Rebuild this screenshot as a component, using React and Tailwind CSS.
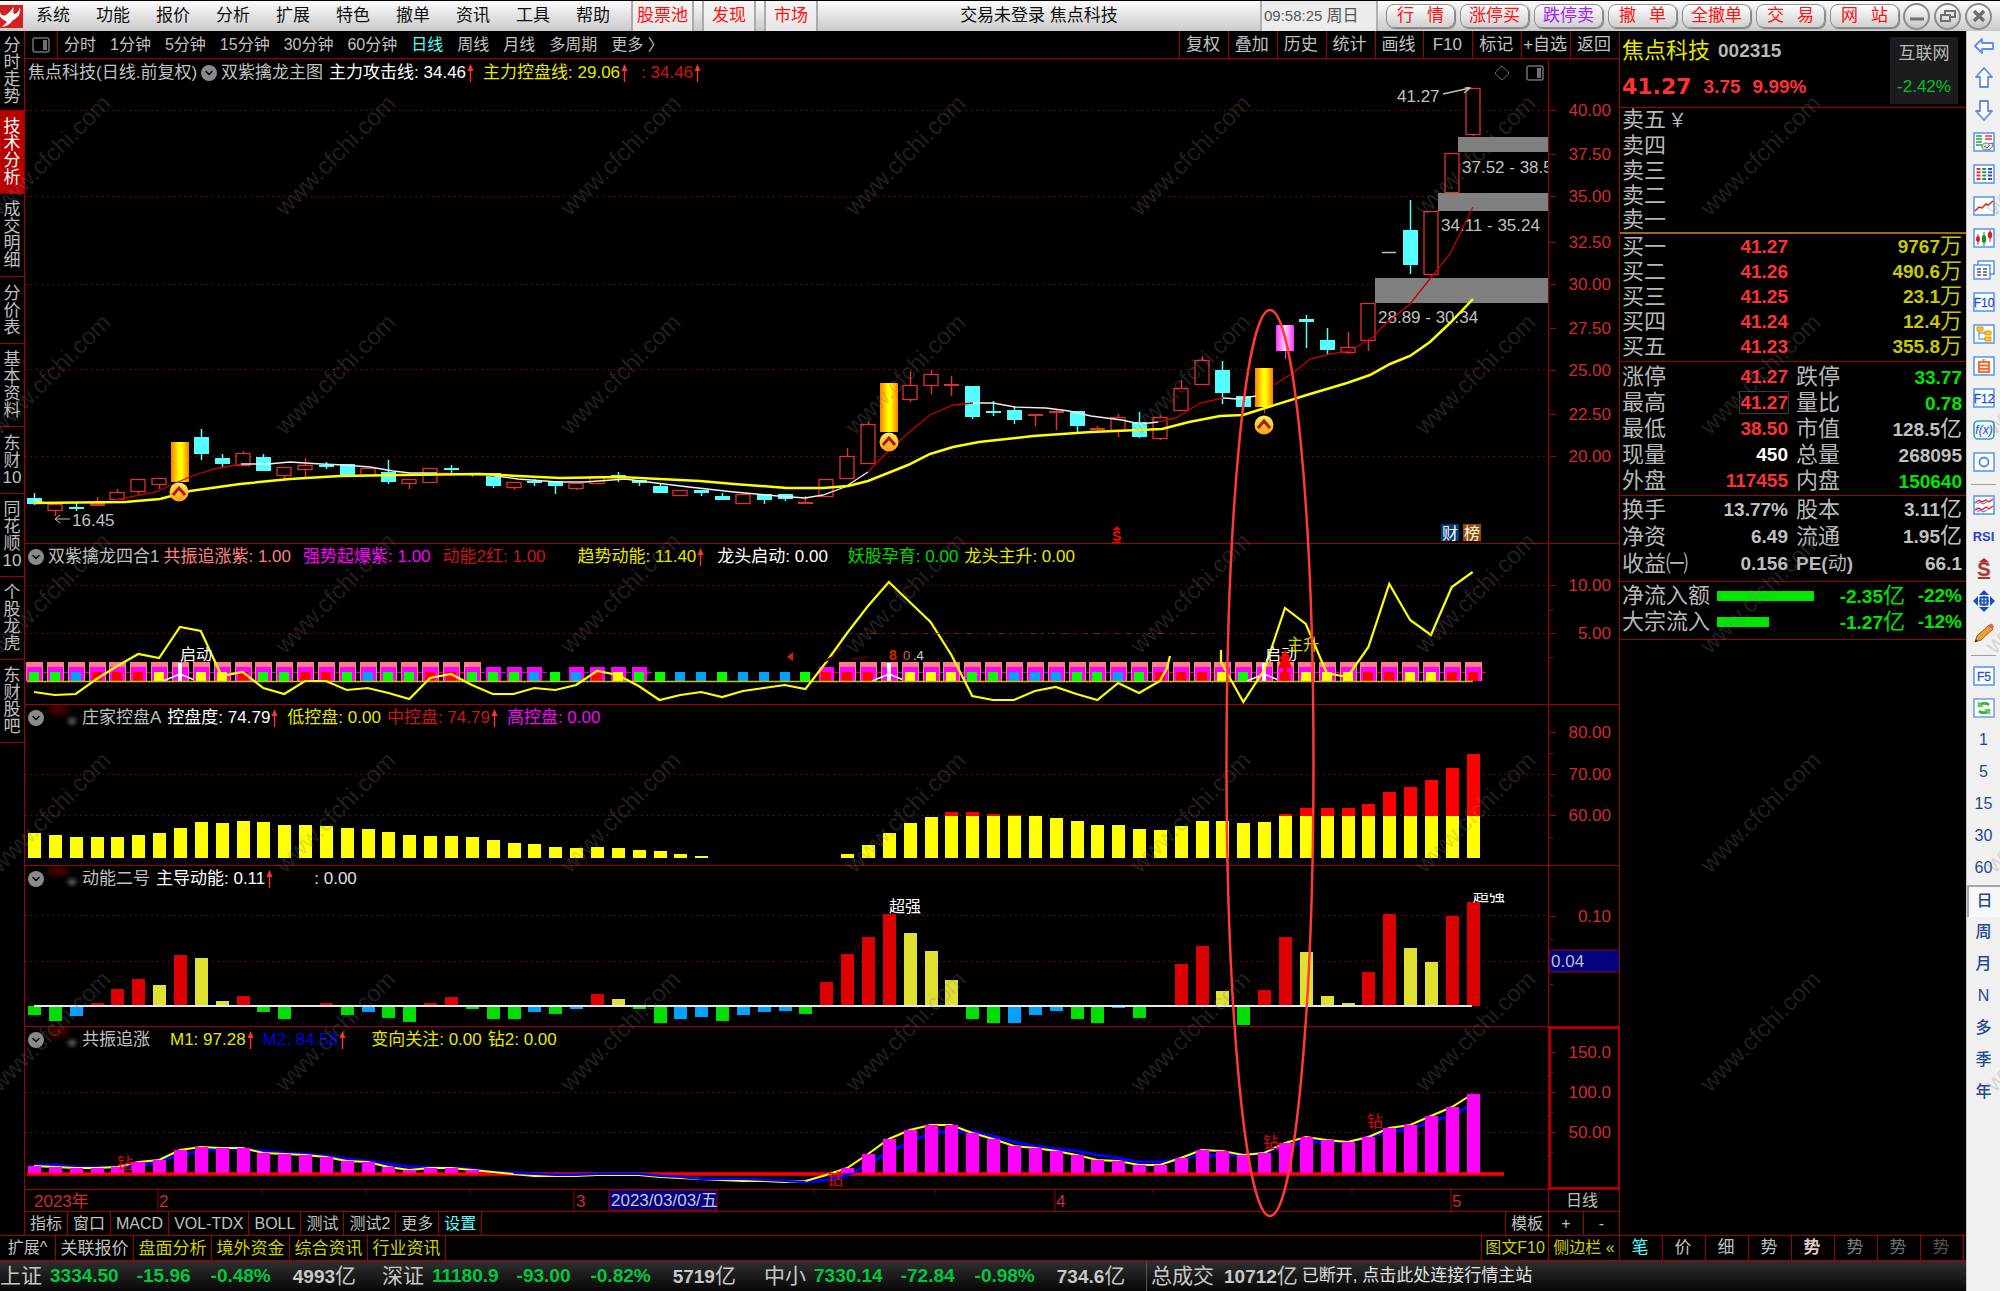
import { Fragment } from "react";
import { ChevronDown, Diamond } from "lucide-react";

// --- Shared chart geometry ---
const FIRST_X = 34;
const STEP = 20.85;
const barX = (i) => FIRST_X + i * STEP;

const BAR_COLORS = { r: "#dd0000", y: "#e0e030", g: "#00e000", b: "#00a2ff" };
const CELL_COLORS = { r: "#ff0000", y: "#ffff00", g: "#00ff00", b: "#00a2ff" };

// kind, body top, body bottom, high, low
const CANDLES = [
  ["c", 498, 504, 493, 505], ["r", 504, 510, 504, 516], ["c", 507, 508, 503, 511], ["r", 503, 506, 497, 506],
  ["r", 492, 499, 489, 499], ["r", 479, 491, 479, 494], ["r", 478, 484, 478, 489], ["gold", 442, 482, 442, 482],
  ["c", 437, 454, 429, 460], ["c", 458, 464, 454, 468], ["r", 453, 465, 451, 465], ["c", 457, 471, 454, 471],
  ["r", 467, 475, 467, 478], ["r", 465, 469, 458, 478], ["c", 465, 466, 462, 469], ["c", 464, 475, 464, 475],
  ["r", 468, 475, 468, 475], ["c", 472, 482, 460, 484], ["r", 479, 483, 479, 489], ["r", 468, 482, 468, 483],
  ["c", 468, 470, 465, 473], ["r", 473, 475, 473, 477], ["c", 473, 486, 473, 488], ["r", 482, 487, 482, 490],
  ["c", 481, 483, 479, 486], ["c", 481, 486, 481, 494], ["r", 483, 488, 483, 490], ["r", 476, 483, 476, 483],
  ["c", 475, 477, 472, 482], ["c", 480, 483, 480, 486], ["c", 486, 493, 484, 493], ["r", 490, 495, 490, 495],
  ["c", 490, 493, 490, 496], ["c", 496, 500, 493, 500], ["r", 494, 503, 494, 503], ["c", 494, 500, 494, 504],
  ["c", 494, 499, 494, 501], ["r", 502, 503, 496, 503], ["r", 479, 496, 479, 496], ["r", 456, 478, 448, 478],
  ["r", 424, 463, 421, 463], ["gold", 383, 432, 383, 432], ["r", 385, 399, 371, 402], ["r", 374, 385, 370, 394],
  ["r", 384, 385, 376, 396], ["c", 386, 417, 386, 419], ["c", 411, 413, 401, 416], ["c", 410, 420, 406, 424],
  ["r", 414, 415, 414, 426], ["r", 411, 413, 409, 430], ["c", 411, 426, 411, 432], ["r", 428, 430, 426, 432],
  ["r", 417, 430, 414, 437], ["c", 422, 437, 412, 438], ["r", 417, 438, 415, 440], ["r", 388, 410, 380, 410],
  ["r", 360, 384, 356, 384], ["c", 370, 393, 361, 404], ["c", 396, 407, 396, 409], ["gold", 368, 407, 368, 413],
  ["pink", 325, 351, 325, 359], ["c", 319, 322, 315, 348], ["c", 340, 350, 328, 354], ["r", 347, 352, 332, 354],
  ["r", 303, 340, 303, 351], ["flat", 252, 252, 252, 252], ["c", 230, 265, 200, 274], ["r", 211, 274, 211, 276],
  ["r", 153, 192, 153, 192], ["r", 88, 134, 88, 136],
];

const CONTROL_LINE =
  "34,503 125,502 160,499 190,491 240,484 290,479 340,476 400,475 480,474 560,478 620,477 700,481 734,484 787,488 823,488 848,486 868,481 908,465 930,454 953,447 979,442 1033,436 1091,432 1162,429 1189,422 1220,416 1243,415 1265,408 1310,394 1347,383 1370,375 1390,364 1410,356 1430,342 1450,323 1473,299";

// attack line, red while rising and white while falling
const ATTACK_LINE = [
  ["w", "34,500 45,503"],
  ["r", "115,500 156,492 178,482 192,476 214,469 241,464"],
  ["w", "241,464 268,464 290,462 321,464 344,465 370,467 393,471 410,473 437,473"],
  ["r", "437,473 473,474 495,476"],
  ["w", "495,476 518,479 558,482 585,482 625,479 656,483 689,487 734,492 778,496 805,498 823,495 845,487 868,472"],
  ["r", "868,472 890,449 912,430 930,415 953,405 973,403"],
  ["w", "973,403 993,403 1015,407 1046,408 1069,411 1091,416 1122,420 1140,424 1158,422"],
  ["r", "1158,422 1176,418 1200,403 1223,398"],
  ["w", "1223,398 1238,399 1256,396"],
  ["r", "1274,385 1293,373 1310,359 1330,354 1350,351 1373,337 1383,326 1410,304 1433,275 1450,254 1473,207"],
];

const GAPS = [
  { x: 1458, y: 137, h: 15, label: "37.52 - 38.50", lx: 1462, ly: 173 },
  { x: 1438, y: 193, h: 18, label: "34.11 - 35.24", lx: 1441, ly: 231 },
  { x: 1375, y: 278, h: 25, label: "28.89 - 30.34", lx: 1378, ly: 323 },
];

const CELLS = "ggbrrrywyyrggrrgbggrrgggbgbryggbbgbbbgrrrwyyyggbbbggbgrrrygwryyyrryyrr".split("");

const TREND = [
  692, 695, 694, 679, 666, 654, 658, 627, 631, 676, 672, 688, 694, 681, 681, 690, 688, 693, 699, 678, 674, 685, 694,
  694, 688, 690, 685, 671, 675, 686, 700, 695, 692, 697, 691, 688, 685, 689, 662, 633, 606, 582, 602, 622, 655, 696,
  700, 700, 691, 687, 694, 700, 683, 693, 681,
];
const TREND_TAIL = [702, 670, 608, 624, 673, 677, 647, 584, 620, 635, 587, 572];

const CONTROL = [
  833, 835, 837, 837, 837, 835, 833, 828, 822, 823, 821, 822, 825, 825, 826, 828, 829, 832, 835, 836, 836, 837, 840,
  843, 844, 847, 848, 847, 848, 850, 851, 854, 856, 0, 0, 0, 0, 0, 0, 854, 845, 833, 823, 817, 812, 812, 814, 815, 816,
  818, 821, 825, 825, 829, 830, 826, 821, 821, 823, 822, 814, 808, 808, 808, 804, 792, 787, 780, 768, 754,
];

const MOMENTUM = [
  ["g", 1015], ["g", 1021], ["b", 1016], ["r", 1003], ["r", 989], ["r", 979], ["y", 985], ["r", 955], ["y", 958],
  ["y", 1001], ["r", 996], ["g", 1012], ["g", 1019], null, ["r", 1003], ["g", 1015], ["b", 1012], ["g", 1018],
  ["g", 1022], ["r", 1003], ["r", 997], ["g", 1009], ["g", 1019], ["g", 1019], ["b", 1012], ["g", 1014], ["b", 1009],
  ["r", 994], ["y", 999], ["g", 1009], ["g", 1023], ["b", 1019], ["b", 1017], ["g", 1021], ["b", 1015], ["b", 1012],
  ["b", 1011], ["g", 1014], ["r", 982], ["r", 954], ["r", 937], ["r", 914], ["y", 933], ["y", 951], ["y", 980],
  ["g", 1019], ["g", 1023], ["b", 1023], ["b", 1015], ["b", 1011], ["g", 1019], ["g", 1023], ["b", 1008], ["g", 1018],
  null, ["r", 964], ["r", 946], ["y", 991], ["g", 1025], ["r", 990], ["r", 937], ["y", 952], ["y", 996], ["y", 1003],
  ["r", 972], ["r", 914], ["y", 948], ["y", 962], ["r", 916], ["r", 902],
];

const M1 = [
  1166, 1167, 1168, 1168, 1167, 1162, 1160, 1150, 1147, 1148, 1148, 1153, 1154, 1155, 1157, 1161, 1162, 1167, 1170,
  1168, 1168, 1170, 1172, 1174, 1176, 1176, 1176, 1175, 1175, 1175, 1177, 1178, 1179, 1180, 1181, 1181, 1182, 1181,
  1175, 1168, 1154, 1139, 1130, 1125, 1125, 1133, 1139, 1146, 1148, 1151, 1155, 1160, 1161, 1165, 1165, 1158, 1150,
  1151, 1155, 1153, 1143, 1137, 1140, 1142, 1137, 1128, 1125, 1116, 1107, 1094,
];
const M2 = [
  1165, 1165, 1167, 1167, 1167, 1166, 1161, 1155, 1151, 1149, 1149, 1151, 1153, 1154, 1156, 1159, 1161, 1164, 1167,
  1167, 1168, 1169, 1172, 1173, 1174, 1175, 1175, 1174, 1174, 1174, 1176, 1177, 1179, 1179, 1179, 1180, 1181, 1182,
  1180, 1175, 1165, 1152, 1142, 1133, 1131, 1132, 1136, 1142, 1146, 1149, 1151, 1155, 1158, 1162, 1162, 1159, 1155,
  1155, 1155, 1153, 1146, 1142, 1142, 1142, 1137, 1132, 1128, 1122, 1115, 1105,
];

const toPoints = (list, start = 0) => list.map((y, i) => `${barX(i + start)},${y}`).join(" ");

// --- Small pieces ---
const UpArrow = () => (
  <svg className="mx-px h-[18px] w-[7px] shrink-0" viewBox="0 0 7 18">
    <path d="M3.5 0 6.5 7H.5z" fill="#ff3232" />
    <path d="M3.5 6v12" stroke="#ff3232" strokeWidth="1.4" />
  </svg>
);

const Collapse = () => (
  <button aria-label="展开指标" className="flex h-4 w-4 shrink-0 items-center justify-center rounded-full bg-[#8a8a8a]">
    <ChevronDown className="h-3 w-3 text-black" strokeWidth={3} />
  </button>
);

// leftover of the masked author name before an indicator title
const Smudge = () => (
  <span className="relative h-6 w-8 shrink-0">
    <span className="absolute left-1 top-0 h-2 w-5 rounded-full bg-[#5a0000] blur-[3px]" />
    <span className="absolute right-0 top-3 h-1.5 w-2 rounded-full bg-[#666] blur-[2px]" />
  </span>
);

const SplitIcon = () => (
  <svg className="h-4 w-[18px]" viewBox="0 0 18 16" fill="none">
    <rect x="1" y="1" width="16" height="14" rx="2" stroke="#707070" strokeWidth="1.5" />
    <rect x="11" y="3" width="4" height="10" fill="#707070" />
  </svg>
);

const Grid = ({ ys }) =>
  ys.map((y) => <path key={y} d={`M25 ${y}.5H1548`} stroke="#a00000" strokeDasharray="1.5 4" />);

function Axis({ top, height, labels, minor = [], children }) {
  return (
    <svg className="block h-full w-[71px]" viewBox={`1548 ${top} 71 ${height}`}>
      {children}
      {labels.map(([y, text]) => (
        <Fragment key={text}>
          <path d={`M1549 ${y}.5h6`} stroke="#b00000" />
          <text x="1610" y={y + 6} textAnchor="end" fill="#d02c2c" fontSize="17">
            {text}
          </text>
        </Fragment>
      ))}
      {minor.map((y) => (
        <path key={y} d={`M1549 ${y}.5h3`} stroke="#b00000" />
      ))}
    </svg>
  );
}

function Panel({ header, headerClass = "h-[26px]", axis, children }) {
  return (
    <section className="flex border-b border-[#a00000]">
      <div className="min-w-0 flex-1">
        <div className={`flex items-center overflow-hidden whitespace-nowrap pl-[3px] text-[17px] leading-6 ${headerClass}`}>
          {header}
        </div>
        {children}
      </div>
      <div className="w-[71px] shrink-0 border-l border-[#a00000]">{axis}</div>
    </section>
  );
}

function Candle({ i, data: [kind, top, bottom, high, low] }) {
  const x = Math.round(barX(i));
  const h = Math.max(bottom - top, 2);
  if (kind === "flat") return <path d={`M${x - 7} ${top}.5h14`} stroke="#c0c0c0" strokeWidth="1.5" />;
  if (kind === "gold" || kind === "pink") {
    return (
      <g>
        <path d={`M${x}.5 ${bottom}V${low}`} stroke={kind === "gold" ? "#ff3232" : "#ff32ff"} />
        <rect x={x - 9} y={top} width="18" height={h} fill={`url(#${kind})`} />
      </g>
    );
  }
  const color = kind === "c" ? "#54ffff" : "#e03030";
  return (
    <g>
      <path d={`M${x}.5 ${high}V${top}M${x}.5 ${bottom}V${low}`} stroke={color} strokeWidth="1.5" />
      {kind === "c" || h < 4 ? (
        <rect x={x - 7} y={top} width="15" height={h} fill={color} />
      ) : (
        <rect x={x - 7} y={top + 0.5} width="14" height={h} fill="#000" stroke={color} strokeWidth="1.3" />
      )}
    </g>
  );
}

const Signal = ({ x, y }) => (
  <g>
    <circle cx={x} cy={y} r="9.5" fill="url(#coin)" />
    <path d={`M${x - 6} ${y + 3} ${x} ${y - 4} ${x + 6} ${y + 3}`} fill="none" stroke="#b01800" strokeWidth="3" />
  </g>
);

// --- Chart panels ---
function MainChart() {
  return (
    <Panel
      headerClass="h-[28px]"
      axis={
        <Axis
          top={59}
          height={484}
          labels={[
            [110, "40.00"], [154, "37.50"], [196, "35.00"], [242, "32.50"], [284, "30.00"],
            [328, "27.50"], [370, "25.00"], [414, "22.50"], [456, "20.00"],
          ]}
        />
      }
      header={
        <>
          <span className="text-[#c0c0c0]">焦点科技(日线.前复权)</span>
          <span className="mx-1">
            <Collapse />
          </span>
          <span className="mr-1.5 text-[#c0c0c0]">双紫擒龙主图</span>
          <span className="text-white">主力攻击线: 34.46</span>
          <UpArrow />
          <span className="ml-2 text-[#e6e600]">主力控盘线: 29.06</span>
          <UpArrow />
          <span className="ml-3 text-[#d01414]">: 34.46</span>
          <UpArrow />
          <span className="ml-auto flex items-center gap-4 pr-1">
            <Diamond className="h-4 w-4 text-[#707070]" strokeWidth={1.5} />
            <SplitIcon />
          </span>
        </>
      }
    >
      <svg className="block h-auto w-full" viewBox="25 87 1523 456">
        <defs>
          <linearGradient id="gold">
            <stop offset="0" stopColor="#ff7a00" />
            <stop offset=".45" stopColor="#ffff00" />
            <stop offset=".6" stopColor="#ffff00" />
            <stop offset="1" stopColor="#ff7a00" />
          </linearGradient>
          <linearGradient id="pink">
            <stop offset="0" stopColor="#ff32ff" />
            <stop offset=".5" stopColor="#ffd8ff" />
            <stop offset="1" stopColor="#ff32ff" />
          </linearGradient>
          <linearGradient id="coin" x2="0" y2="1">
            <stop offset="0" stopColor="#fff060" />
            <stop offset="1" stopColor="#ff9a10" />
          </linearGradient>
        </defs>
        <Grid ys={[110, 196, 284, 369, 456]} />
        {GAPS.map((g) => (
          <rect key={g.y} x={g.x} y={g.y} width={1548 - g.x} height={g.h} fill="#808080" />
        ))}
        {GAPS.map((g) => (
          <text key={g.label} x={g.lx} y={g.ly} fill="#c0c0c0" fontSize="17">
            {g.label}
          </text>
        ))}
        {CANDLES.map((c, i) => (
          <Candle key={i} i={i} data={c} />
        ))}
        {ATTACK_LINE.map(([tone, pts]) => (
          <polyline key={pts} points={pts} fill="none" stroke={tone === "r" ? "#c80000" : "#f0f0f0"} strokeWidth="1.3" />
        ))}
        <polyline points={CONTROL_LINE} fill="none" stroke="#ffff00" strokeWidth="2.5" />
        <Signal x={179} y={492} />
        <Signal x={889} y={442} />
        <Signal x={1264} y={425} />
        <path d="M70 519H55m5-4-5 4 5 4" fill="none" stroke="#c0c0c0" />
        <text x="72" y="526" fill="#c0c0c0" fontSize="17">16.45</text>
        <path d="m1443 94 27-6m-8-2 8 2-6 5" fill="none" stroke="#c0c0c0" strokeWidth="1.3" />
        <text x="1397" y="102" fill="#c0c0c0" fontSize="17">41.27</text>
        <text x="1112" y="541" fill="#ff0000" fontSize="14" fontWeight="bold">S</text>
        <path d="m1117 526 4 4h-8zM1112 542h9v1h-9z" fill="#ff0000" />
        <rect x="1441" y="524" width="18" height="17" fill="#003c78" />
        <text x="1442" y="539" fill="#fff" fontSize="16">财</text>
        <rect x="1463" y="524" width="18" height="17" fill="#964b00" />
        <text x="1464" y="539" fill="#fff" fontSize="16">榜</text>
      </svg>
    </Panel>
  );
}

function ComboPanel() {
  return (
    <Panel
      axis={<Axis top={544} height={160} labels={[[585, "10.00"], [633, "5.00"]]} minor={[610, 657]} />}
      header={
        <>
          <Collapse />
          <span className="mx-1 text-[#c0c0c0]">双紫擒龙四合1</span>
          <span className="mr-3 text-[#ff8080]">共振追涨紫: 1.00</span>
          <span className="mr-3 text-[#ff00ff]">强势起爆紫: 1.00</span>
          <span className="mr-8 text-[#d01414]">动能2红: 1.00</span>
          <span className="text-[#e6e600]">趋势动能: 11.40</span>
          <UpArrow />
          <span className="ml-3 mr-5 text-white">龙头启动: 0.00</span>
          <span className="mr-1.5 text-[#00d800]">妖股孕育: 0.00</span>
          <span className="text-[#e6e600]">龙头主升: 0.00</span>
        </>
      }
    >
      <svg className="block h-auto w-full" viewBox="25 570 1523 134">
        <Grid ys={[585, 633]} />
        {CELLS.map((c, i) => {
          const x = Math.round(barX(i));
          const salmon = i < 22 || i > 38;
          const magenta = i < 25 || (i > 25 && i < 30) || i > 37;
          return (
            <g key={i}>
              {magenta && <path d={`M${x + 8} 672.5h5`} stroke={c === "r" ? "#ff0000" : "#d000d0"} />}
              {salmon && <rect x={x - 8} y="662" width="17" height="19" fill="#ff8080" />}
              {magenta && <rect x={x - 7} y="667" width="15" height="14" fill="#ff00ff" />}
              {c === "w" ? (
                <>
                  <path d={`M${x - 17} 681 ${x} 674 ${x + 17} 681`} fill="none" stroke="#fff" strokeWidth="1.5" />
                  <path d={`M${x} 663v18`} stroke="#fff" strokeWidth="4" />
                </>
              ) : (
                <rect x={x - 5} y="672" width="10" height="9" fill={CELL_COLORS[c]} />
              )}
            </g>
          );
        })}
        <path d="M27 681.5H1473" stroke="#c8c800" strokeWidth="1.5" />
        <polyline points={`${toPoints(TREND)} 1167,668 1170,656`} fill="none" stroke="#ffff00" strokeWidth="2.2" />
        <polyline points={`1221,650 1221,662 ${toPoints(TREND_TAIL, 58)}`} fill="none" stroke="#ffff00" strokeWidth="2.2" />
        <path d="m787 657 6-5v9z" fill="#e02000" />
        <path d="M825 661l10-5M838 652l3-5M852 659l16-2" stroke="#500000" strokeWidth="2" />
        <path d="M946 640l12 14M860 633.5H1220" fill="none" stroke="#802000" strokeDasharray="3 7 6 5 2 9" />
        <text x="889" y="660" fill="#e02000" fontSize="14" fontWeight="bold">8</text>
        <text x="903" y="660" fill="#d07050" fontSize="13">0</text>
        <text x="913" y="660" fill="#c8d8d8" fontSize="13">.4</text>
        <text x="180" y="660" fill="#fff" fontSize="16">启动</text>
        <text x="1265" y="660" fill="#fff" fontSize="16">启动</text>
        <text x="1287" y="650" fill="#d8d800" fontSize="16">主升</text>
        <path d="m1285 650 6 9h-3l4 9h-5v13h-4v-13h-5l4-9h-3z" fill="#ff0000" />
      </svg>
    </Panel>
  );
}

function ControlPanel() {
  return (
    <Panel
      axis={<Axis top={705} height={160} labels={[[732, "80.00"], [774, "70.00"], [815, "60.00"]]} minor={[753, 795, 837]} />}
      header={
        <>
          <Collapse />
          <Smudge />
          <span className="mx-1.5 text-[#c0c0c0]">庄家控盘A</span>
          <span className="text-white">控盘度: 74.79</span>
          <UpArrow />
          <span className="ml-2 mr-1.5 text-[#e6e600]">低控盘: 0.00</span>
          <span className="text-[#d01414]">中控盘: 74.79</span>
          <UpArrow />
          <span className="ml-2 text-[#ff00ff]">高控盘: 0.00</span>
        </>
      }
    >
      <svg className="block h-auto w-full" viewBox="25 731 1523 134">
        <Grid ys={[774, 815]} />
        {CONTROL.map((y, i) => {
          if (!y) return null;
          const x = Math.round(barX(i)) - 6;
          return (
            <g key={i}>
              {y < 816 && <rect x={x} y={y} width="13" height={816 - y} fill="#ff0000" />}
              <rect x={x} y={Math.max(y, 816)} width="13" height={858 - Math.max(y, 816)} fill="#ffff00" />
            </g>
          );
        })}
      </svg>
    </Panel>
  );
}

function MomentumPanel() {
  return (
    <Panel
      axis={
        <Axis top={866} height={160} labels={[[916, "0.10"]]} minor={[939, 984]}>
          <rect x="1548" y="950" width="71" height="22" fill="#000080" stroke="#a00000" />
          <text x="1550" y="967" fill="#c0c0c0" fontSize="17">0.04</text>
        </Axis>
      }
      header={
        <>
          <Collapse />
          <Smudge />
          <span className="mx-1.5 text-[#c0c0c0]">动能二号</span>
          <span className="text-white">主导动能: 0.11</span>
          <UpArrow />
          <span className="ml-10 text-[#e0e0e0]">: 0.00</span>
        </>
      }
    >
      <svg className="block h-auto w-full" viewBox="25 892 1523 134">
        <Grid ys={[915, 961]} />
        {MOMENTUM.map((m, i) => {
          if (!m) return null;
          const [tone, y] = m;
          return (
            <rect
              key={i}
              x={Math.round(barX(i)) - 6}
              y={Math.min(y, 1006)}
              width="13"
              height={Math.abs(1006 - y)}
              fill={BAR_COLORS[tone]}
            />
          );
        })}
        <path d="M34 1006H1472" stroke="#e8e8e8" strokeWidth="2" />
        <text x="889" y="912" fill="#fff" fontSize="16">超强</text>
        <clipPath id="strongClip">
          <rect x="1470" y="893" width="40" height="12" />
        </clipPath>
        <text x="1473" y="901" fill="#fff" fontSize="16" clipPath="url(#strongClip)">超强</text>
      </svg>
    </Panel>
  );
}

function ResonancePanel() {
  return (
    <Panel
      axis={
        <Axis top={1027} height={162} labels={[[1052, "150.0"], [1092, "100.0"], [1132, "50.00"]]} minor={[1072, 1112, 1152]}>
          <rect x="1549" y="1028" width="69" height="160" fill="none" stroke="#b40000" strokeWidth="2" />
        </Axis>
      }
      header={
        <>
          <Collapse />
          <Smudge />
          <span className="ml-1.5 mr-5 text-[#c0c0c0]">共振追涨</span>
          <span className="text-[#e6e600]">M1: 97.28</span>
          <UpArrow />
          <span className="ml-2 text-[#0000e0]">M2: 84.58</span>
          <UpArrow />
          <span className="ml-6 mr-1.5 text-[#e6e600]">变向关注: 0.00</span>
          <span className="text-[#e6e600]">钻2: 0.00</span>
        </>
      }
    >
      <svg className="block h-auto w-full" viewBox="25 1053 1523 136">
        <Grid ys={[1092, 1132]} />
        <path d="M27 1174H1504" stroke="#ff0000" strokeWidth="3.5" />
        <polyline points={toPoints(M2)} fill="none" stroke="#0000ff" strokeWidth="3" />
        <polyline points={toPoints(M1)} fill="none" stroke="#ffff00" strokeWidth="2" />
        <polyline points={toPoints(M2.slice(23, 38), 23)} fill="none" stroke="#0000ff" strokeWidth="2" />
        {M1.map((y, i) =>
          y < 1171 ? (
            <rect key={i} x={Math.round(barX(i)) - 6} y={y} width="13" height={1173 - y} fill="#ff00ff" />
          ) : null
        )}
        {[[117, 1169], [827, 1185], [1263, 1148], [1367, 1127]].map(([x, y]) => (
          <text key={x} x={x} y={y} fill="#e80000" fontSize="16">
            钻
          </text>
        ))}
      </svg>
    </Panel>
  );
}

function DateAxis() {
  return (
    <div className="flex border-b border-[#a00000]">
      <svg className="block h-auto min-w-0 flex-1" viewBox="25 1190 1523 21" fontSize="17">
        {[158, 574, 1055, 1451].map((x) => (
          <path key={x} d={`M${x} 1190v21`} stroke="#a00000" />
        ))}
        {[262, 366, 470, 814, 935, 1153, 1352].map((x) => (
          <path key={x} d={`M${x} 1190v3`} stroke="#a00000" />
        ))}
        {[[34, "2023年"], [159, "2"], [576, "3"], [1056, "4"], [1452, "5"]].map(([x, t]) => (
          <text key={t} x={x} y="1207" fill="#d02c2c">
            {t}
          </text>
        ))}
        <rect x="609" y="1190" width="108" height="20" fill="#000080" stroke="#a00000" />
        <text x="611" y="1206" fill="#c8c8c8">2023/03/03/五</text>
      </svg>
      <div className="w-[71px] shrink-0 border-l border-[#a00000] pr-1 text-center text-base leading-[21px] text-[#c0c0c0]">日线</div>
    </div>
  );
}

// --- Bars around the charts ---
const MENU = ["系统", "功能", "报价", "分析", "扩展", "特色", "撤单", "资讯", "工具", "帮助"];
const TRADE = [
  ["行", "情"], ["涨停买"], ["跌停卖"], ["撤", "单"], ["全撤单"], ["交", "易"], ["网", "站"],
];

const RoundButton = ({ label, children }) => (
  <button
    aria-label={label}
    className="flex h-[27px] w-[27px] items-center justify-center rounded-full border-2 border-[#8c8c8c] bg-gradient-to-b from-white to-[#c4c4c4]"
  >
    <svg className="h-4 w-4" viewBox="0 0 16 16" fill="none" stroke="#707070" strokeWidth="2">
      {children}
    </svg>
  </button>
);

function MenuBar() {
  return (
    <header className="flex h-[31px] items-center whitespace-nowrap border-t border-black bg-gradient-to-b from-[#fbfbfb] to-[#cacaca] text-[17px] leading-6 text-[#101010]">
      <svg className="h-[23px] w-[23px] shrink-0" viewBox="0 0 23 23">
        <rect width="23" height="23" fill="#d42020" />
        <path d="M0 7c1 4 4 4 6 3 3-2 5-5 8-8-1 3-1 6 0 7 3 0 5-3 6-7 1 7-2 11-7 13-2 3-5 6-11 7l5-5c-2-2-6-3-7-6z" fill="#fff" />
      </svg>
      {MENU.map((m) => (
        <button key={m} className="px-[13px]">
          {m}
        </button>
      ))}
      <div className="ml-2 flex h-full gap-2">
        {["股票池", "发现", "市场"].map((m) => (
          <button key={m} className="min-w-[54px] border-x-2 border-[#aaa] bg-[#f2f2f2]/70 px-1 text-[#ff1010]">
            {m}
          </button>
        ))}
      </div>
      <h1 className="flex-1 text-center">交易未登录 焦点科技</h1>
      <div className="flex h-full w-[118px] items-center gap-1 border-x-2 border-[#b0b0b0] bg-[#ececec] pl-0.5 text-[#555]">
        <span className="text-[15px]">09:58:25</span>
        <span className="text-base">周日</span>
      </div>
      <div className="ml-2 flex items-center gap-[5px]">
        {TRADE.map((t) => (
          <button
            key={t.join("")}
            className={`flex h-6 w-[69px] items-center rounded-lg border border-[#909090] bg-gradient-to-b from-white to-[#cfcfcf] px-2.5 shadow-[1px_1px_1px_#777] ${
              t.length > 1 ? "justify-between" : "justify-center"
            } ${t[0] === "跌停卖" ? "text-[#a020ff]" : "text-[#ff1010]"}`}
          >
            {t.map((s) => (
              <span key={s}>{s}</span>
            ))}
          </button>
        ))}
      </div>
      <div className="ml-1 mr-2 flex gap-1">
        <RoundButton label="最小化">
          <path d="M1 11h14" strokeWidth="3" />
        </RoundButton>
        <RoundButton label="还原">
          <path d="M5 6V3h10v6h-4M1 7h9v6H1z" />
        </RoundButton>
        <RoundButton label="关闭">
          <path d="m3 3 10 10M13 3 3 13" strokeWidth="3.5" />
        </RoundButton>
      </div>
    </header>
  );
}

const PERIODS = ["分时", "1分钟", "5分钟", "15分钟", "30分钟", "60分钟", "日线", "周线", "月线", "多周期", "更多 〉"];
const TOOLS = ["复权", "叠加", "历史", "统计", "画线", "F10", "标记", "+自选", "返回"];

function PeriodBar() {
  return (
    <nav className="flex h-[28px] items-stretch whitespace-nowrap border-b border-[#a00000] text-base leading-[26px] text-[#c0c0c0]">
      <button aria-label="布局" className="flex w-[33px] items-center justify-center border-r border-[#a00000]">
        <SplitIcon />
      </button>
      <div className="flex gap-3.5 pl-1.5">
        {PERIODS.map((p) => (
          <button key={p} className={p === "日线" ? "text-[#54ffff]" : ""}>
            {p}
          </button>
        ))}
      </div>
      <div className="ml-auto grid w-[440px] grid-cols-9 text-[17px]">
        {TOOLS.map((t) => (
          <button key={t} className="border-l border-[#a00000] pr-0.5">
            {t}
          </button>
        ))}
      </div>
    </nav>
  );
}

const VIEWS = [
  ["分", "时", "走", "势"], ["技", "术", "分", "析"], ["成", "交", "明", "细"], ["分", "价", "表"], ["基", "本", "资", "料"],
  ["东", "财", "10"], ["同", "花", "顺", "10"], ["个", "股", "龙", "虎"], ["东", "财", "股", "吧"],
];

function ViewTabs() {
  return (
    <nav className="flex w-[25px] shrink-0 flex-col border-r border-[#a00000] text-[17px] leading-[17px] text-[#c0c0c0]">
      {VIEWS.map((v, i) => (
        <button
          key={i}
          className={`flex flex-col items-center justify-center border-b border-[#a00000] ${
            v.length === 3 ? "h-[67px]" : i === 0 ? "h-[80px]" : "h-[83px]"
          } ${i === 1 ? "bg-[#b80000] text-white" : ""}`}
        >
          {v.map((c, n) => (
            <span key={n}>{c}</span>
          ))}
        </button>
      ))}
    </nav>
  );
}

const INDICATORS = ["指标", "窗口", "MACD", "VOL-TDX", "BOLL", "测试", "测试2", "更多", "设置"];
const EXTRAS = ["关联报价", "盘面分析", "境外资金", "综合资讯", "行业资讯"];

function IndicatorTabs() {
  return (
    <nav className="flex h-[24px] whitespace-nowrap border-b border-[#a00000] text-base leading-[22px] text-[#c0c0c0]">
      {INDICATORS.map((t) => (
        <button key={t} className={`border-r border-[#a00000] px-[5px] ${t === "设置" ? "text-[#54ffff]" : ""}`}>
          {t}
        </button>
      ))}
      <button className="ml-auto w-[43px] border-l border-[#a00000]">模板</button>
      <button className="w-[35px] border-l border-[#a00000]">+</button>
      <button className="w-[36px] border-l border-[#a00000]">-</button>
    </nav>
  );
}

function ExtraTabs() {
  return (
    <nav className="flex h-[25px] whitespace-nowrap border-b border-[#a00000] text-[17px] leading-[23px] text-[#d0d000]">
      <button className="w-[56px] border-r border-[#a00000] text-base text-[#c0c0c0]">扩展^</button>
      {EXTRAS.map((t, i) => (
        <button key={t} className={`w-[78px] border-r border-[#a00000] ${i === 0 ? "text-[#c0c0c0]" : ""}`}>
          {t}
        </button>
      ))}
      <button className="ml-auto w-[67px] border-l border-[#a00000] text-base">图文F10</button>
      <button className="w-[71px] overflow-hidden border-l border-[#a00000] text-base">侧边栏 «</button>
    </nav>
  );
}

// --- Quote panel ---
const BIDS = [
  ["买一", "41.27", "9767"], ["买二", "41.26", "490.6"], ["买三", "41.25", "23.1"], ["买四", "41.24", "12.4"], ["买五", "41.23", "355.8"],
];
const RED = "text-[#ff3232]";
const GREEN = "text-[#00e600]";
const GRAY = "text-[#c0c0c0]";
const STATS = [
  ["涨停", "41.27", RED, "跌停", "33.77", "", GREEN],
  ["最高", "41.27", RED, "量比", "0.78", "", GREEN],
  ["最低", "38.50", RED, "市值", "128.5", "亿", GRAY],
  ["现量", "450", "text-white", "总量", "268095", "", GRAY],
  ["外盘", "117455", RED, "内盘", "150640", "", GREEN],
];
const FUNDAMENTALS = [
  ["换手", "13.77%", GRAY, "股本", "3.11", "亿", GRAY],
  ["净资", "6.49", GRAY, "流通", "1.95", "亿", GRAY],
  ["收益㈠", "0.156", GRAY, "PE(动)", "66.1", "", GRAY],
];

const StatTable = ({ rows, rowClass }) => (
  <table className="w-full table-fixed">
    <tbody>
      {rows.map(([a, av, at, b, bv, unit, bt]) => (
        <tr key={a} className={rowClass}>
          <th className="w-[80px] p-0 text-left font-normal">{a}</th>
          <td className={`w-[86px] p-0 text-right text-[19px] font-bold ${at}`}>
            <span className={a === "最高" ? "outline outline-[#3a3a3a]" : ""}>{av}</span>
          </td>
          <th className="w-[70px] p-0 pl-2 text-left font-normal">
            {b === "PE(动)" ? (
              <span className="text-[19px]">
                <b>PE(</b>动<b>)</b>
              </span>
            ) : (
              b
            )}
          </th>
          <td className={`p-0 text-right ${bt}`}>
            <span className="text-[19px] font-bold">{bv}</span>
            {unit}
          </td>
        </tr>
      ))}
    </tbody>
  </table>
);

const Flow = ({ name, bar, amount, pct }) => (
  <div className="flex h-[26px] items-center">
    <span className="w-[95px]">{name}</span>
    <span className={`h-[10px] bg-[#00e600] ${bar}`} />
    <span className="ml-auto text-[#00e600]">
      <b className="text-[19px]">{amount}</b>亿
    </span>
    <b className="w-[57px] text-right text-[19px] text-[#00e600]">{pct}</b>
  </div>
);

const QUOTE_TABS = [
  ["笔", "text-[#54ffff]"], ["价", "text-[#c0c0c0]"], ["细", "text-[#c0c0c0]"], ["势", "text-[#c0c0c0]"],
  ["势", "text-[#e0c8c8] font-bold"], ["势", "text-[#808080]"], ["势", "text-[#707070]"], ["势", "text-[#585050]"],
];

function QuotePanel() {
  return (
    <aside className="flex w-[347px] shrink-0 flex-col whitespace-nowrap border-l border-[#a00000] text-[22px] leading-[22px] text-[#b8b8b8]">
      <div className="flex h-[77px] justify-between border-b border-[#a00000] pl-0.5 pr-2">
        <div className="flex flex-col gap-2 pt-1.5">
          <div className="flex h-[28px] items-center gap-2">
            <h2 className="text-[#e6e600]">焦点科技</h2>
            <b className="text-[19px]">002315</b>
          </div>
          <div className={`flex h-[28px] items-center gap-3 text-[19px] font-bold ${RED}`}>
            <span className="font-['DejaVu_Sans'] text-[22px]">41.27</span>
            <span>3.75</span>
            <span>9.99%</span>
          </div>
        </div>
        <button className="mt-1.5 flex h-[67px] w-[68px] flex-col items-center justify-between bg-[#1c1c1f] py-1.5 text-[17px]">
          <span>互联网</span>
          <span className="text-[#00c020]">-2.42%</span>
        </button>
      </div>
      <table className="w-full border-b-2 border-[#a06a10]">
        <tbody>
          {["卖五", "卖四", "卖三", "卖二", "卖一"].map((s) => (
            <tr key={s} className="h-[25px]">
              <th className="p-0 pl-0.5 text-left font-normal">
                {s}
                {s === "卖五" && <span className="ml-0.5 text-[19px]">￥</span>}
              </th>
            </tr>
          ))}
        </tbody>
      </table>
      <div className="border-b border-[#a00000] pb-0.5 pl-0.5 pr-1">
        <table className="w-full table-fixed">
          <tbody>
            {BIDS.map(([name, price, vol]) => (
              <tr key={name} className="h-[25px]">
                <th className="w-[80px] p-0 text-left font-normal">{name}</th>
                <td className={`w-[86px] p-0 text-right text-[19px] font-bold ${RED}`}>{price}</td>
                <td className="p-0 text-right text-[#c8c800]">
                  <b className="text-[19px]">{vol}</b>万
                </td>
              </tr>
            ))}
          </tbody>
        </table>
      </div>
      <div className="border-b border-[#a00000] pb-px pl-0.5 pr-1 pt-0.5">
        <StatTable rows={STATS} rowClass="h-[26px]" />
      </div>
      <div className="border-b border-[#a00000] pb-1 pl-0.5 pr-1">
        <StatTable rows={FUNDAMENTALS} rowClass="h-[27px]" />
      </div>
      <div className="border-b border-[#a00000] pb-1 pl-0.5 pr-1 pt-px">
        <Flow name="净流入额" bar="w-[97px]" amount="-2.35" pct="-22%" />
        <Flow name="大宗流入" bar="w-[52px]" amount="-1.27" pct="-12%" />
      </div>
      <nav className="mt-auto flex h-[26px] border-y border-[#a00000] text-[17px] leading-6">
        {QUOTE_TABS.map(([t, tone], i) => (
          <button key={i} className={`w-[43px] border-r border-[#a00000] pr-0.5 ${tone}`}>
            {t}
          </button>
        ))}
      </nav>
    </aside>
  );
}

// --- Index status bar ---
const INDEXES = [
  ["上证", "3334.50", "-15.96", "-0.48%", "4993"],
  ["深证", "11180.9", "-93.00", "-0.82%", "5719"],
  ["中小", "7330.14", "-72.84", "-0.98%", "734.6"],
];

function StatusBar() {
  return (
    <footer className="flex h-[30px] items-center whitespace-nowrap bg-gradient-to-b from-[#303030] to-[#080808] text-[21px] leading-[28px] text-[#c8c8c8]">
      {INDEXES.map(([name, value, diff, pct, amount]) => (
        <div key={name} className="flex w-[382px] items-center">
          <span>{name}</span>
          <b className="ml-2 text-[19px] text-[#00c83c]">{value}</b>
          <b className="ml-[18px] text-[19px] text-[#00c83c]">{diff}</b>
          <b className="ml-5 text-[19px] text-[#00c83c]">{pct}</b>
          <span className="ml-[22px]">
            <b className="text-[19px]">{amount}</b>亿
          </span>
        </div>
      ))}
      <div className="flex items-center border-l border-[#555] pl-1">
        <span>总成交</span>
        <span className="ml-2.5">
          <b className="text-[19px]">10712</b>亿
        </span>
      </div>
      <button className="ml-1 text-[17px] text-[#e0e0e0]">已断开, 点击此处连接行情主站</button>
    </footer>
  );
}

// --- Right icon strip ---
const Boxed = ({ children, stroke = "#5b9cf0" }) => (
  <svg className="h-5 w-[22px]" viewBox="0 0 22 20" fill="none">
    <rect x="1" y="1" width="20" height="18" fill="#fff" stroke={stroke} strokeWidth="1.6" />
    {children}
  </svg>
);

const BoxedText = ({ children }) => (
  <Boxed>
    <text x="11" y="15" textAnchor="middle" fill="#2a50d0" stroke="#2a50d0" strokeWidth=".3" fontSize="12">
      {children}
    </text>
  </Boxed>
);

const Arrow = ({ d }) => (
  <svg className="h-6 w-6" viewBox="0 0 24 24" fill="#fff" stroke="#5b8fe8" strokeWidth="1.8" strokeLinejoin="round">
    <path d={d} />
  </svg>
);

const STRIP = [
  ["后退", <Arrow d="M3 12 10 5v4h11v6H10v4z" />],
  ["上一个", <Arrow d="m12 2 8 9h-4v10H8V11H4z" />],
  ["下一个", <Arrow d="m12 22 8-9h-4V3H8v10H4z" />],
  ["自选报价", <Boxed>
    <path d="M3 4h6M3 7h6M3 10h6M3 13h6" stroke="#20a040" strokeWidth="1.6" />
    <path d="M12 4h7M12 7h7" stroke="#f03030" strokeWidth="1.6" />
    <path d="M9 15c0-4 4-5 6-3l5-1c0 5-3 7-7 7-2 0-4-1-4-3z" fill="#e4e4e4" stroke="#666" />
    <path d="m11 14 3 2 3-3" stroke="#666" />
  </Boxed>],
  ["行情表", <Boxed>
    <path d="M5.500 4v13" stroke="#f03030" strokeWidth="4" strokeDasharray="2 1.300" />
    <path d="M11.200 4v13" stroke="#20a040" strokeWidth="4" strokeDasharray="2 1.300" />
    <path d="M17 4v13" stroke="#4040e0" strokeWidth="4" strokeDasharray="2 1.300" />
  </Boxed>],
  ["分时图", <Boxed><path d="m2 15 4-4 3 1 4-4 2 1 5-4" stroke="#e02020" strokeWidth="1.5" /></Boxed>],
  ["K线图", <Boxed>
    <path d="M5 6v11M17 2v12" stroke="#e02020" />
    <ellipse cx="5" cy="11" rx="2" ry="3" fill="#e02020" />
    <ellipse cx="17" cy="7" rx="2.2" ry="3.5" fill="#e02020" />
    <path d="M11 4v14" stroke="#109030" />
    <ellipse cx="11" cy="11" rx="2.200" ry="4" fill="#109030" />
  </Boxed>],
  ["资讯", <svg className="h-5 w-[22px]" viewBox="0 0 22 20" fill="#fff" stroke="#5b8fe8" strokeWidth="1.5">
    <path d="M5 1h16v13H5z" />
    <path d="M1 5h16v14H1z" />
    <path d="M4 9h4m2 0h4M4 12h4m2 0h4M4 15h4m2 0h4" stroke="#555" />
  </svg>],
  ["F10", <BoxedText>F10</BoxedText>],
  ["板块", <Boxed>
    <path d="M4 3h6v4H4zM12 7h6v4h-6zM12 13h6v4h-6z" fill="#ffc030" stroke="#e0a000" />
    <path d="M6 7v8h6M6 9h6" stroke="#4a80d0" />
  </Boxed>],
  ["自选股", <Boxed>
    <path d="M6 6h10v10H6zM6 9.500h10M6 13h10M11 3 10 6" stroke="#f07030" strokeWidth="2" />
  </Boxed>],
  ["F12", <BoxedText>F12</BoxedText>],
  ["公式", <svg className="h-5 w-[22px]" viewBox="0 0 22 20">
    <rect x="1" y="1" width="20" height="18" rx="4" fill="#e8f6ff" stroke="#4a9aa8" strokeWidth="1.6" />
    <text x="11" y="14" textAnchor="middle" fill="#2a50d0" fontSize="12" fontStyle="italic">f(x)</text>
  </svg>],
  ["循环", <Boxed><circle cx="11" cy="10" r="4.500" stroke="#3a90e0" strokeWidth="1.8" /></Boxed>],
  null,
  ["多图", <Boxed>
    <path d="m2 8 4-3 3 2 4-2 3 2 4-3" stroke="#e02020" strokeWidth="1.4" />
    <path d="m2 15 4-2 3 2 4-3 3 2 4-3" stroke="#e02020" strokeWidth="1.4" />
    <path d="m4 9 3-2 3 2 4-2M4 17l3-2 3 2 4-2" stroke="#4060e0" />
  </Boxed>],
  ["RSI", <span className="text-[13px] font-bold text-[#2a40c8]">RSI</span>],
  ["除权", <svg className="h-6 w-5" viewBox="0 0 20 24">
    <text x="10" y="19" textAnchor="middle" fill="#c02828" fontSize="20" fontWeight="bold" stroke="#888" strokeWidth=".6">S</text>
    <path d="m10 1 5 4H5zM4 20h12v2H4z" fill="#c02828" />
  </svg>],
  ["移动", <svg className="h-6 w-6" viewBox="0 0 24 24" fill="#1a50b8">
    <path d="m12 1 5 5H7zM12 23l5-5H7zM1 12l5-5v10zM23 12l-5-5v10z" />
    <path d="M8.500 8.500h7v7h-7z" fill="none" stroke="#1a50b8" strokeWidth="2" />
    <path d="M7 12h10M12 7v10" stroke="#1a50b8" strokeWidth="1.5" />
  </svg>],
  ["画线", <svg className="h-6 w-6" viewBox="0 0 24 24">
    <path d="m3 21 2-6L17 4l4 4L9 19z" fill="#f0a030" stroke="#a06010" />
    <path d="m16 5 2-2q2-1 3 1t1 2l-2 2z" fill="#e86060" />
    <path d="m3 21 1-3 2 2z" fill="#333" />
  </svg>],
  null,
  ["F5", <BoxedText>F5</BoxedText>],
  ["刷新", <Boxed stroke="#78a0f0">
    <path d="M6 9c0-4 7-5 10-2M16 11c0 4-7 5-10 2" stroke="#40b040" strokeWidth="3" />
    <path d="M5 3v6h6zM17 17v-6h-6z" fill="#60c850" />
  </Boxed>],
];

const STRIP_PERIODS = ["1", "5", "15", "30", "60", "日", "周", "月", "N", "多", "季", "年"];

function IconStrip() {
  return (
    <aside className="flex w-[34px] shrink-0 flex-col border-l border-[#c8c8c8] bg-[#f0f0f0] text-[#1c4a94]">
      {STRIP.map((item, i) =>
        item ? (
          <button key={i} aria-label={item[0]} className="flex h-8 items-center justify-center pb-0.5">
            {item[1]}
          </button>
        ) : (
          <div key={i} className="mx-1 my-[5px] h-px bg-[#a0a0a0]" />
        )
      )}
      {STRIP_PERIODS.map((p) => (
        <button
          key={p}
          className={`h-8 pb-0.5 text-base font-medium ${
            p === "日" ? "border-l-2 border-t-2 border-[#a8a8a8] bg-[#f8f8f8]" : ""
          }`}
        >
          {p}
        </button>
      ))}
    </aside>
  );
}

function Watermark() {
  const marks = [];
  for (let row = 0; row < 5; row++) {
    for (let col = 0; col < 8; col++) marks.push([col * 285, 217 + row * 219]);
  }
  return (
    <svg aria-hidden="true" className="pointer-events-none absolute inset-0 h-full w-full">
      {marks.map(([x, y]) => (
        <text key={`${x}-${y}`} fill="#808080" fillOpacity=".25" fontSize="24" transform={`translate(${x} ${y}) rotate(-45)`}>
          www.cfchi.com
        </text>
      ))}
      <ellipse cx="1270" cy="763" rx="43.5" ry="453" fill="none" stroke="#ff3838" strokeWidth="2.5" />
    </svg>
  );
}

export default function App() {
  return (
    <div className="relative flex flex-col overflow-hidden bg-black font-['Liberation_Sans','Noto_Sans_CJK_SC',sans-serif]">
      <MenuBar />
      <div className="flex">
        <div className="min-w-0 flex-1">
          <div className="flex">
            <main className="flex min-w-0 flex-1 flex-col">
              <div className="flex border-b border-[#a00000]">
                <ViewTabs />
                <div className="-mb-px min-w-0 flex-1">
                  <PeriodBar />
                  <MainChart />
                  <ComboPanel />
                  <ControlPanel />
                  <MomentumPanel />
                  <ResonancePanel />
                  <DateAxis />
                  <IndicatorTabs />
                </div>
              </div>
              <ExtraTabs />
            </main>
            <QuotePanel />
          </div>
          <StatusBar />
        </div>
        <IconStrip />
      </div>
      <Watermark />
    </div>
  );
}
